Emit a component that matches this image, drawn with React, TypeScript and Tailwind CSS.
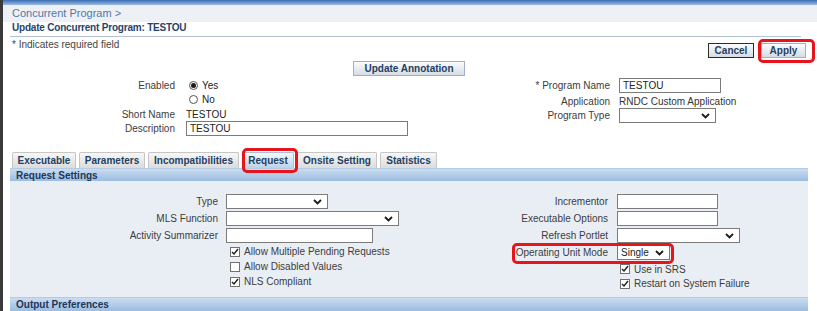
import React from 'react';

const Chevron = () => (
  <svg width="9" height="6" viewBox="0 0 9 6" className="shrink-0">
    <path d="M1 1l3.5 3.5L8 1" fill="none" stroke="#1a1a1a" strokeWidth="1.8" />
  </svg>
);

const Select = ({ w, value }: { w: number; value?: string }) => (
  <div
    className="h-[15px] bg-white border border-[#7b7b7b] flex items-center justify-between pl-[3px] pr-[5px] text-[#222]"
    style={{ width: w }}
  >
    <span>{value}</span>
    <Chevron />
  </div>
);

const Input = ({ w, value }: { w: number; value?: string }) => (
  <div
    className="h-[15px] bg-white border border-[#7b7b7b] flex items-center pl-[3px] text-[#222]"
    style={{ width: w }}
  >
    {value}
  </div>
);

const Check = ({ checked, label }: { checked: boolean; label: string }) => (
  <div className="flex items-center gap-[4px]">
    <div className="w-[10px] h-[10px] bg-white border border-[#707070] flex items-center justify-center">
      {checked && (
        <svg width="8" height="8" viewBox="0 0 8 8">
          <path d="M1 4l2 2 4-5" fill="none" stroke="#222" strokeWidth="1.5" />
        </svg>
      )}
    </div>
    <span>{label}</span>
  </div>
);

const Radio = ({ on }: { on: boolean }) => (
  <div className="w-[9px] h-[9px] rounded-full border border-[#555] bg-white flex items-center justify-center">
    {on && <div className="w-[5px] h-[5px] rounded-full bg-[#1a1a1a]" />}
  </div>
);

const Btn = ({ label, w, dark }: { label: string; w: number; dark?: boolean }) => (
  <div
    className={`h-[15px] flex items-center justify-center font-bold text-[#233f63] bg-gradient-to-b from-[#fbfcfd] to-[#d5dce6] border ${
      dark ? 'border-[#2b2b2b]' : 'border-[#9fb0c6]'
    }`}
    style={{ width: w }}
  >
    {label}
  </div>
);

const tabs = [
  { label: 'Executable', w: 64 },
  { label: 'Parameters', w: 66 },
  { label: 'Incompatibilities', w: 91 },
  { label: 'Request', w: 52, active: true },
  { label: 'Onsite Setting', w: 80 },
  { label: 'Statistics', w: 57 },
];

export default function App() {
  return (
    <div className="relative w-[817px] h-[311px] overflow-hidden bg-white flex font-['Liberation_Sans',Arial,sans-serif] text-[10px] text-[#3c3c3c]">
      <div className="w-[3px] bg-[#3a3a3a] shrink-0" />
      <div className="flex-1 flex flex-col">
        <div className="h-[5px] bg-gradient-to-b from-[#3a6db3] to-[#9bbde4]" />
        {/* breadcrumb */}
        <div className="h-[17px] bg-[#edf1f6] pl-[9px] flex items-center text-[11px] text-[#5277a6]">
          Concurrent Program &gt;
        </div>
        {/* title */}
        <div className="h-[15px] ml-[7px] mr-[16px] pl-[2px] border-b border-[#b6c2d3] flex items-end pb-[1px] font-bold text-[#27436a] tracking-[-0.2px]">
          Update Concurrent Program: TESTOU
        </div>
        {/* required + buttons */}
        <div className="h-[24px] flex justify-between items-start pr-[11px]">
          <div className="pl-[9px] text-[#444]">* Indicates required field</div>
          <div className="flex gap-[7px] mt-[6px]">
            <Btn label="Cancel" w={46} dark />
            <Btn label="Apply" w={45} />
          </div>
        </div>
        <div className="h-[15px] pl-[350px]">
          <Btn label="Update Annotation" w={112} />
        </div>
        {/* header form */}
        <div className="h-[60px] flex">
          <div className="w-[497px] pl-[82px] grid grid-cols-[90px_1fr] gap-x-[11px] grid-rows-[16px_15px_14px_15px] items-center">
            <div className="text-right self-start pt-[2px]">Enabled</div>
            <div className="flex items-center gap-[4px] pl-[3px] pt-[2px] text-[#222]">
              <Radio on /> Yes
            </div>
            <div />
            <div className="flex items-center gap-[4px] pl-[3px] text-[#222]">
              <Radio on={false} /> No
            </div>
            <div className="text-right">Short Name</div>
            <div className="text-[#222]">TESTOU</div>
            <div className="text-right">Description</div>
            <Input w={222} value="TESTOU" />
          </div>
          <div className="pt-[1px] grid grid-cols-[110px_1fr] gap-x-[9px] grid-rows-[17px_14px_15px] items-center">
            <div className="text-right">* Program Name</div>
            <Input w={102} value="TESTOU" />
            <div className="text-right">Application</div>
            <div className="text-[#333]">RNDC Custom Application</div>
            <div className="text-right">Program Type</div>
            <Select w={97} />
          </div>
        </div>
        {/* tabs */}
        <div className="mt-[16px] h-[16px] pl-[9px] flex gap-[3px] items-end">
          {tabs.map((t) => (
            <div
              key={t.label}
              className={`h-[16px] flex items-center justify-center font-bold text-[#233f63] border border-b-0 rounded-t-[2px] ${
                t.active
                  ? 'bg-gradient-to-b from-[#f5f8fb] to-[#bcd2ea] border-[#a9bfd8]'
                  : 'bg-gradient-to-b from-[#f7f7f7] to-[#dcdcdc] border-[#c6c6c6]'
              }`}
              style={{ width: t.w }}
            >
              {t.label}
            </div>
          ))}
        </div>
        {/* request settings bar */}
        <div className="ml-[7px] mr-[9px] h-[13px] bg-gradient-to-b from-[#cadcf0] to-[#9bbde1] border-t border-[#b3cbe5] flex items-center pl-[6px] font-bold text-[#1e3658]">
          Request Settings
        </div>
        <div className="ml-[7px] mr-[9px] h-[116px] bg-[#e9eef5] pt-[12px] pl-[100px] flex">
          <div className="w-[388px] grid grid-cols-[108px_1fr] gap-x-[8px] grid-rows-[17px_17px_17px_15px_15px_15px] content-start items-center">
            <div className="text-right">Type</div>
            <Select w={102} />
            <div className="text-right">MLS Function</div>
            <Select w={173} />
            <div className="text-right">Activity Summarizer</div>
            <Input w={147} />
            <div />
            <div className="pl-[4px]"><Check checked label="Allow Multiple Pending Requests" /></div>
            <div />
            <div className="pl-[4px]"><Check checked={false} label="Allow Disabled Values" /></div>
            <div />
            <div className="pl-[4px]"><Check checked label="NLS Compliant" /></div>
          </div>
          <div className="grid grid-cols-[110px_1fr] gap-x-[9px] grid-rows-[17px_17px_17px_17px_15px_15px] content-start items-center">
            <div className="text-right">Incrementor</div>
            <Input w={101} />
            <div className="text-right">Executable Options</div>
            <Input w={101} />
            <div className="text-right">Refresh Portlet</div>
            <Select w={123} />
            <div className="text-right">Operating Unit Mode</div>
            <Select w={53} value="Single" />
            <div />
            <div className="pl-[3px] pt-[1px]"><Check checked label="Use in SRS" /></div>
            <div />
            <div className="pl-[3px]"><Check checked label="Restart on System Failure" /></div>
          </div>
        </div>
        <div className="ml-[7px] mr-[9px] h-[14px] bg-gradient-to-b from-[#cadcf0] to-[#9bbde1] border-t border-[#b3cbe5] flex items-center pl-[6px] font-bold text-[#1e3658]">
          Output Preferences
        </div>
      </div>

      {/* annotation highlights */}
      <div className="absolute left-[758px] top-[39px] w-[57px] h-[24px] border-[3px] border-[#e8141b] rounded-[5px]" />
      <div className="absolute left-[242px] top-[148px] w-[56px] h-[25px] border-[3px] border-[#e8141b] rounded-[5px]" />
      <div className="absolute left-[512px] top-[243px] w-[162px] h-[21px] border-[3px] border-[#e8141b] rounded-[5px]" />
    </div>
  );
}
